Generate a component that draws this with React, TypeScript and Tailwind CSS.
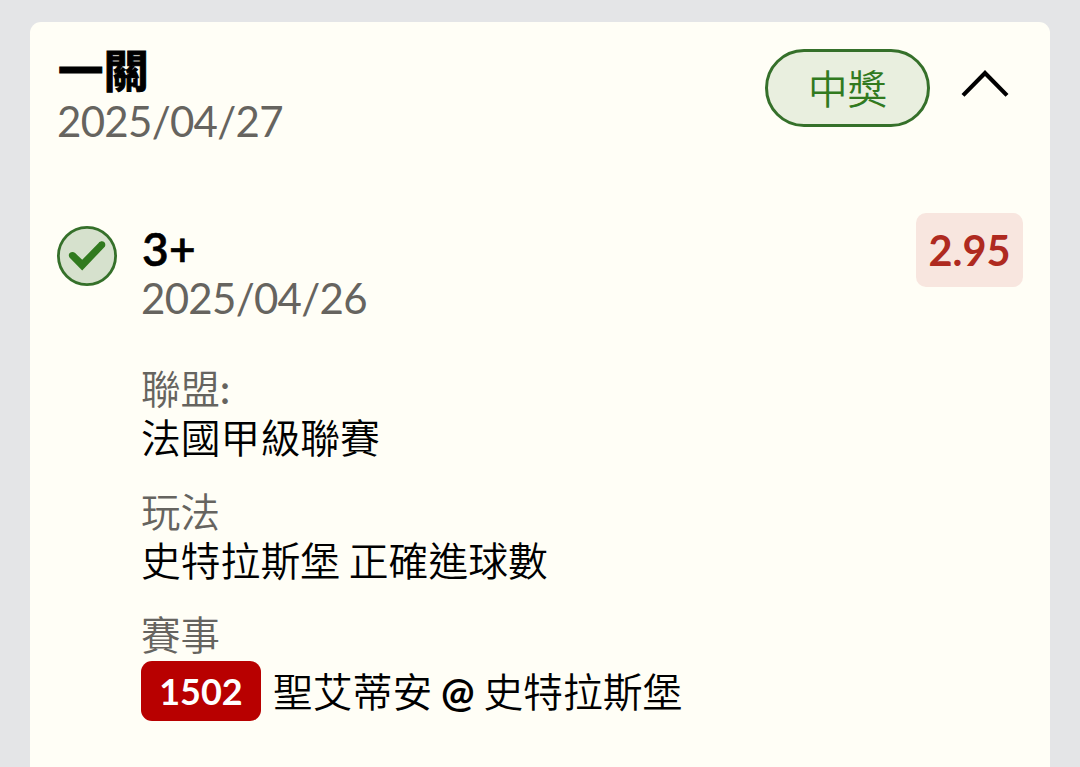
const details = [
  { label: "聯盟", colon: true, value: "法國甲級聯賽" },
  { label: "玩法", colon: false, value: "史特拉斯堡 正確進球數" },
];

function ChevronUpIcon() {
  return (
    <svg
      className="h-[30px] w-[50px]"
      viewBox="0 0 50 30"
      fill="none"
      stroke="#000"
      strokeWidth="4.2"
    >
      <path d="M3 28.4 25 6l22 22.4" />
    </svg>
  );
}

function WonIcon() {
  return (
    <svg className="h-[60px] w-[60px] shrink-0" viewBox="0 0 60 60" fill="none">
      <circle cx="30" cy="30" r="28.6" fill="#d6e1cd" stroke="#35702a" strokeWidth="2.8" />
      <path
        d="M13.2 32.2c-2.2-2.2-1.4-4.4-.2-5.4 1.6-1.3 3.6-1.2 5.2.3l7 6.7 16.4-16.9c1.7-1.7 4-2 5.6-.8 1.2 1 1.4 2.8.8 4.3L25.2 44.6Z"
        fill="#317a1f"
      />
    </svg>
  );
}

export default function App() {
  return (
    <div className="flex h-[767px] flex-col overflow-hidden bg-[#e4e5e7] px-[30px] pt-[22px] font-['Lato','Noto_Sans_CJK_TC',sans-serif] text-black">
      <div className="flex-1 rounded-t-[11px] bg-[#fffef6] pr-[27px] pl-7">
        {/* Bet header */}
        <div className="flex justify-between pt-[25px]">
          <div>
            <h1 className="text-[45.4px] leading-[47px] font-bold [-webkit-text-stroke:1px_#000]">一關</h1>
            <p className="-ml-px pt-0.5 text-[42px] leading-[50px] tracking-[-0.7px] text-[#66645f]">2025/04/27</p>
          </div>
          <div className="flex items-start pt-0.5 pr-[13px]">
            <span className="flex h-[78px] w-[165px] items-center justify-center rounded-full border-3 border-[#35702a] bg-[#e9efdf] pt-0.5 text-[39.5px] leading-none font-[350] text-[#317a1f]">
              中獎
            </span>
            <button type="button" className="mt-[18px] ml-[30px]">
              <ChevronUpIcon />
            </button>
          </div>
        </div>

        {/* Selection */}
        <div className="mt-[67px] flex items-start">
          <div className="-ml-px mt-[13px]">
            <WonIcon />
          </div>
          <div className="ml-[25px] flex-1 pt-[11px]">
            <h2 className="text-[46px] leading-[49px] font-semibold tracking-[0.3px] [-webkit-text-stroke:0.6px_#000]">3+</h2>
            <p className="-ml-px text-[42px] leading-[50px] tracking-[-0.7px] text-[#66645f]">2025/04/26</p>
          </div>
          <span className="flex h-[74px] w-[107px] items-center justify-center rounded-[10px] bg-[#f8e6df] pt-0.5 text-[41.5px] leading-none font-bold text-[#af2a20]">
            2.95
          </span>
        </div>

        <div className="mt-[41px] ml-[83px] space-y-[25px] text-[39.8px] leading-[49px] font-[350] whitespace-nowrap">
          {details.map((item) => (
            <div key={item.label}>
              <p className="text-[39.5px] text-[#66645f]">
                {item.label}
                {item.colon && <span className="font-semibold">:</span>}
              </p>
              <p className="[word-spacing:-2px]">{item.value}</p>
            </div>
          ))}
          <div>
            <p className="text-[39.5px] text-[#66645f]">賽事</p>
            <div className="mt-0.5 flex items-center">
              <span className="flex h-[60px] w-[120px] items-center justify-center rounded-[11px] bg-[#b80000] text-[36px] leading-none font-bold text-white">
                1502
              </span>
              <span className="ml-3 [word-spacing:-2px]">
                聖艾蒂安 <span className="font-bold">@</span> 史特拉斯堡
              </span>
            </div>
          </div>
        </div>
      </div>
    </div>
  );
}
